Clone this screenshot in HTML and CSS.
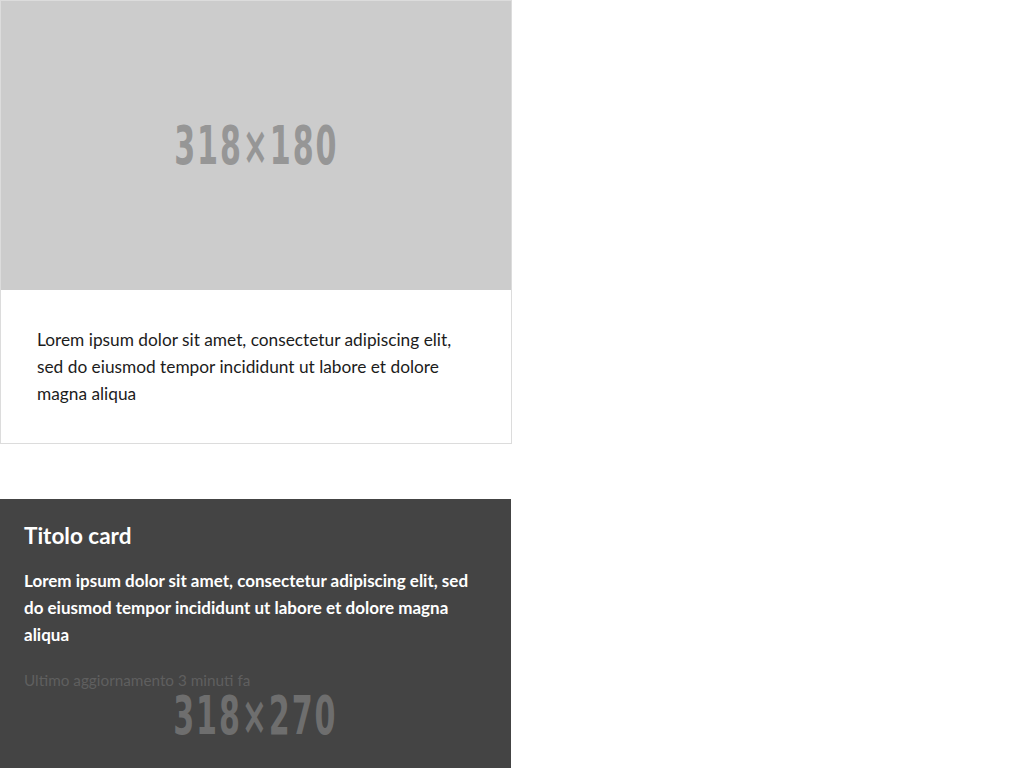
FILE: index.html
```html
<!DOCTYPE html>
<html lang="it">
<head>
<meta charset="utf-8">
<title>Card</title>
<link rel="stylesheet" href="styles.css">
</head>
<body>
<div class="col">
  <div class="card card-plain">
    <div class="ph ph-light"><span class="ph-label">318×180</span></div>
    <div class="card-body">
      <p class="card-text">Lorem ipsum dolor sit amet, consectetur adipiscing elit, sed do eiusmod tempor incididunt ut labore et dolore magna aliqua</p>
    </div>
  </div>

  <div class="card card-overlay">
    <div class="ph ph-dark"><span class="ph-label">318×270</span></div>
    <div class="overlay-body">
      <h5 class="card-title">Titolo card</h5>
      <p class="card-text-strong">Lorem ipsum dolor sit amet, consectetur adipiscing elit, sed do eiusmod tempor incididunt ut labore et dolore magna aliqua</p>
      <p class="card-meta">Ultimo aggiornamento 3 minuti fa</p>
    </div>
  </div>
</div>
</body>
</html>
```
FILE: styles.css
```css
html, body {
  margin: 0;
  padding: 0;
  background: #fff;
}
body {
  font-family: "Lato", "Open Sans", sans-serif;
  color: #1c1c1c;
  height: 768px;
  overflow: hidden;
}
.col {
  width: 512px;
  display: flex;
  flex-direction: column;
  gap: 55px;
}
.card {
  box-sizing: border-box;
  width: 512px;
}
.card-plain {
  border: 1px solid #dcdcdc;
}
.ph {
  display: flex;
  align-items: center;
  justify-content: center;
  overflow: hidden;
}
.ph-light {
  height: 289px;
  background: #cccccc;
  color: #969696;
}
.ph-dark {
  height: 433px;
  background: #444444;
  color: #6e6e6e;
}
.ph-label {
  font-family: "DejaVu Sans Condensed", "DejaVu Sans", sans-serif;
  font-weight: bold;
  font-size: 54px;
  transform: scaleX(0.62);
  letter-spacing: 3px;
  line-height: 1;
}
.card-body {
  padding: 36px 36px 36px 36px;
}
.card-text {
  margin: 0;
  font-size: 17.3px;
  line-height: 27px;
}
.card-overlay {
  display: grid;
  width: 511px;
}
.card-overlay > * {
  grid-area: 1 / 1;
}
.overlay-body {
  padding: 20px 24px;
  align-self: start;
}
.card-title {
  margin: 0 0 14px 0;
  font-size: 22.5px;
  font-weight: 700;
  line-height: 34px;
  color: #fff;
}
.card-text-strong {
  margin: 0;
  font-size: 17px;
  line-height: 27px;
  font-weight: 700;
  color: #fff;
}
.card-meta {
  margin: 20px 0 0 0;
  font-size: 15.3px;
  line-height: 24px;
  color: #5f5f5f;
}
```
